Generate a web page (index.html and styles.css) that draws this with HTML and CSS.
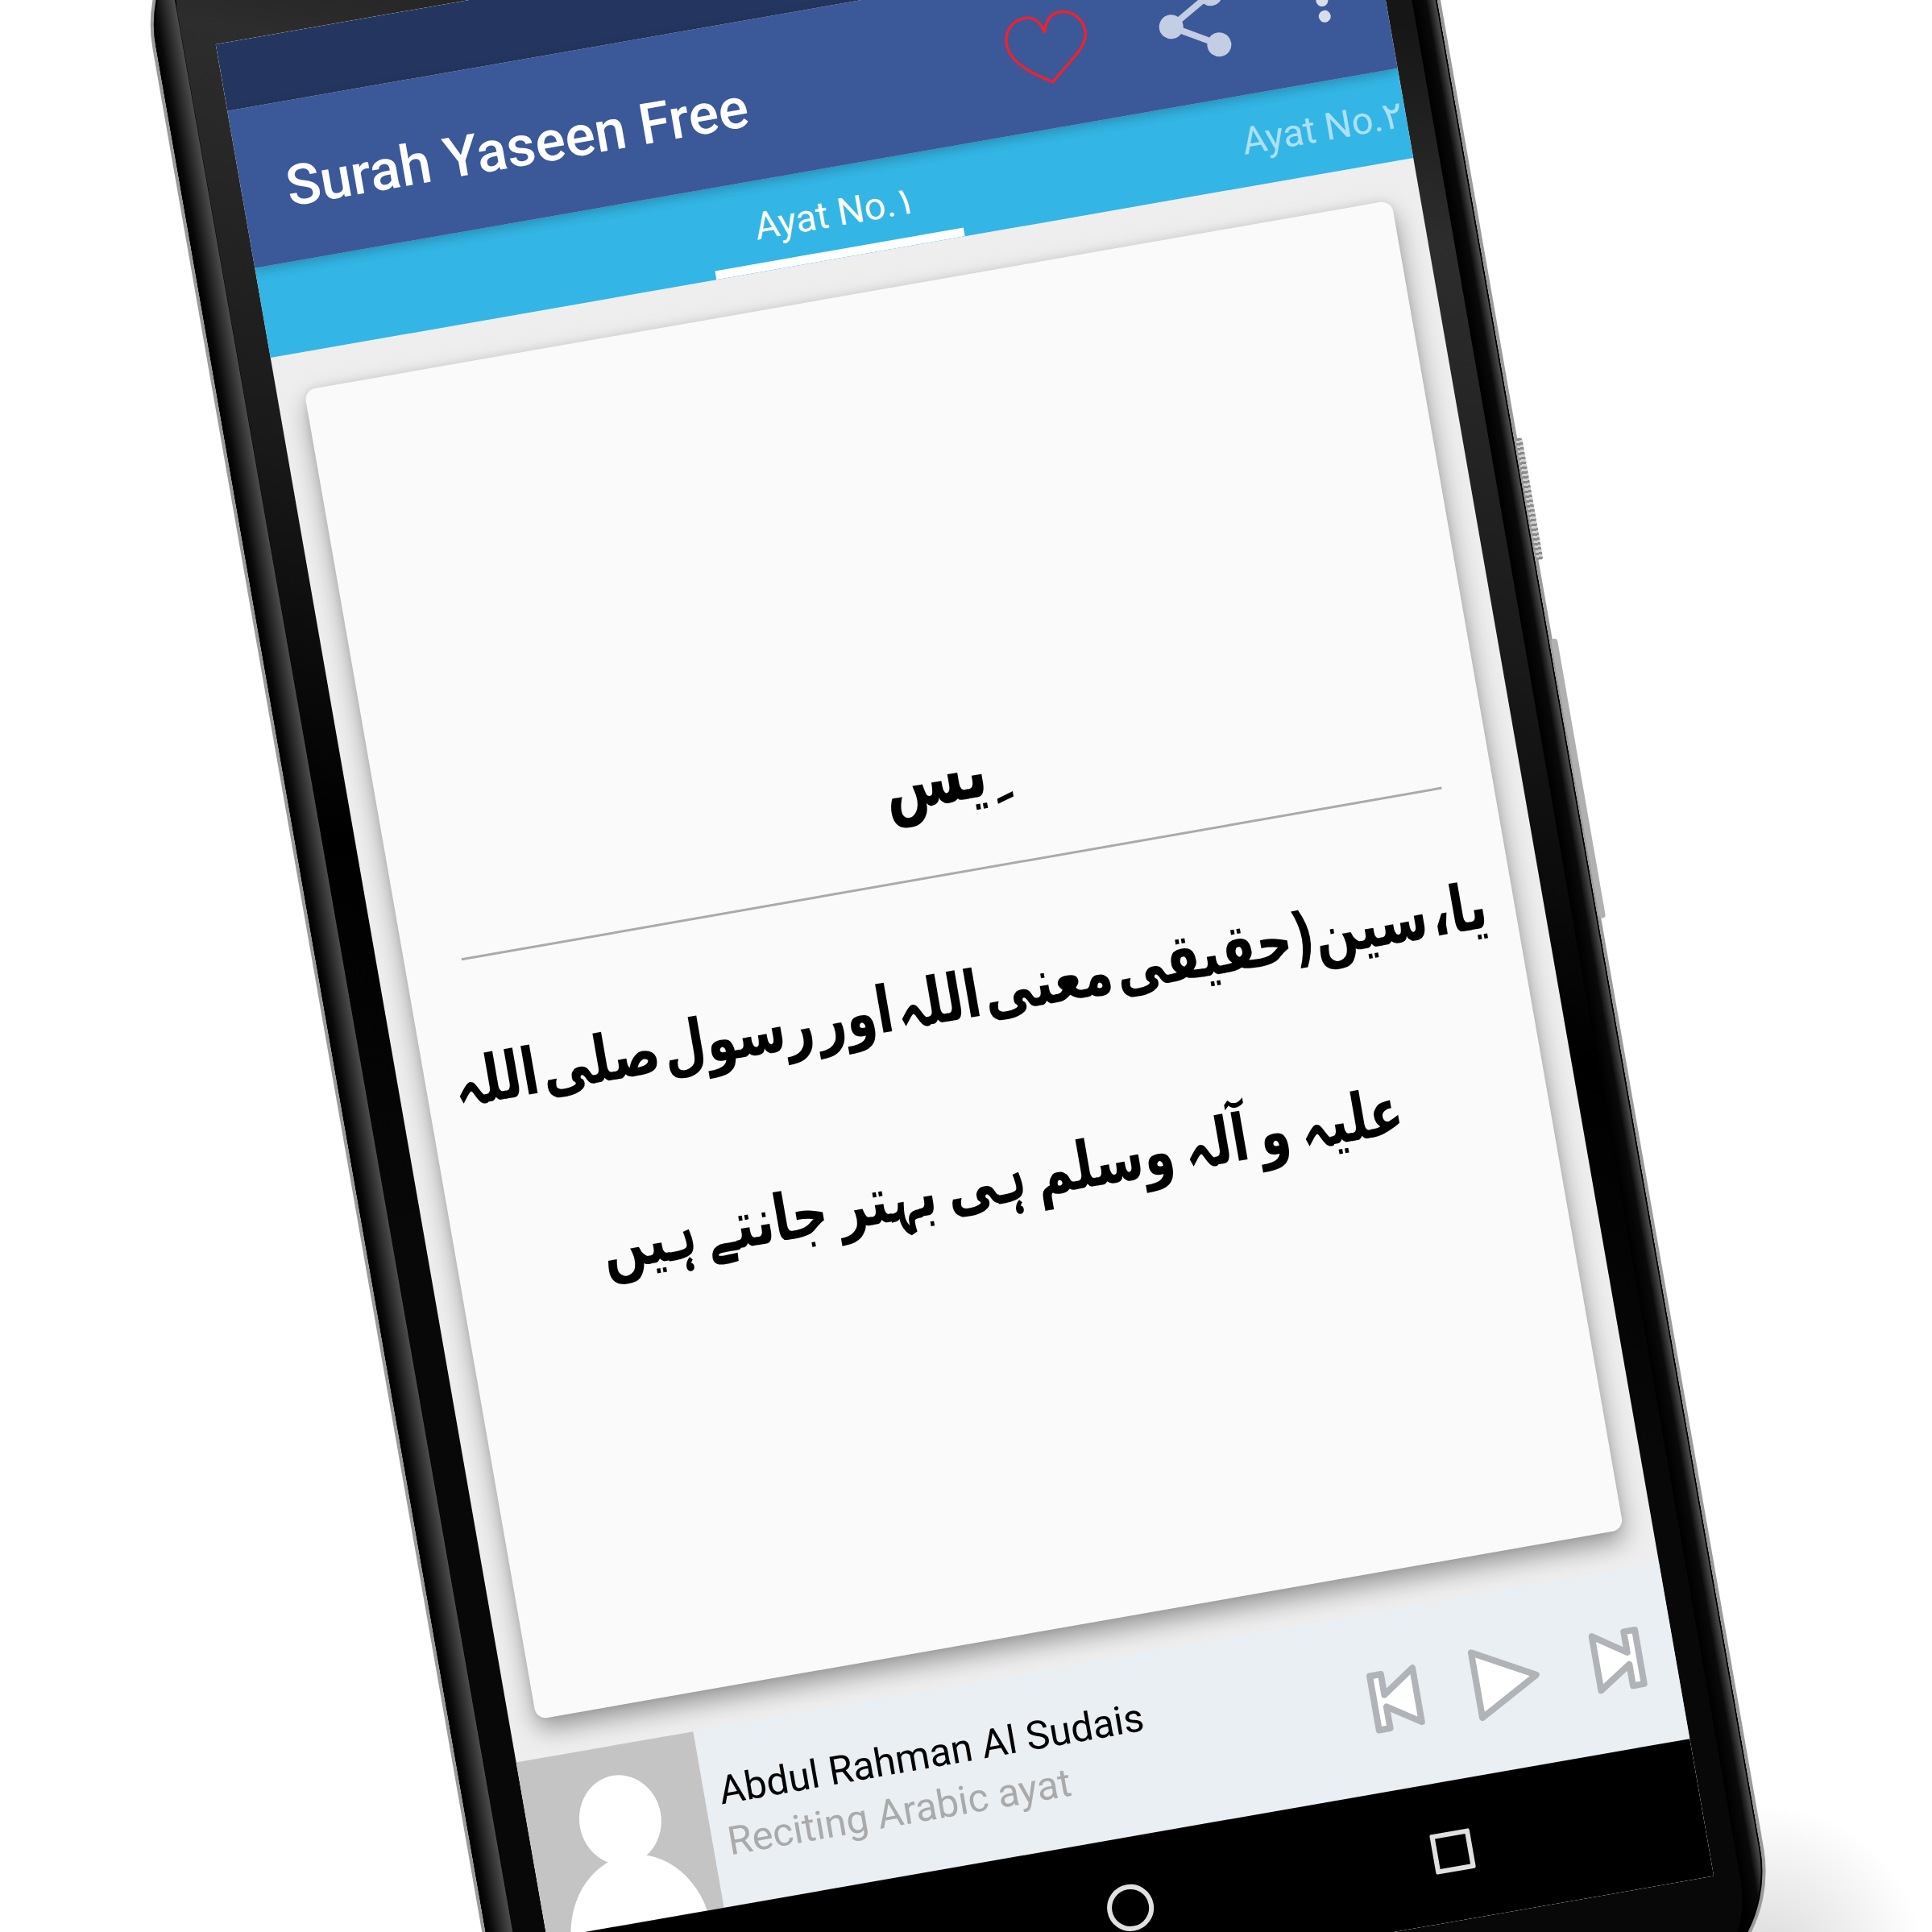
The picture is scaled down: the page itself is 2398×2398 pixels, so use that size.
FILE: index.html
```html
<!DOCTYPE html>
<html lang="en">
<head>
    <meta charset="UTF-8">
    <meta name="viewport" content="width=device-width, initial-scale=1.0">
    <title>Surah Yaseen Free</title>
    <link rel="stylesheet" href="styles.css">
</head>
<body>
    <div class="stage">
        <div class="floor-shadow"></div>

        <div class="phone">
            <span class="side-btn power"></span>
            <span class="side-btn volume"></span>

            <div class="plate">
                <div class="screen">
                    <div class="status-bar"></div>

                    <header class="app-bar">
                        <h1 class="title">Surah Yaseen Free</h1>
                        <div class="actions">
                            <svg class="icon-heart" viewBox="0 0 110 100">
                                <path d="M54 30C51 15 43 8 33 8C17 8 5 20 5 37C5 58 30 78 54 92C72 74 104 58 104 37C104 21 92 8 76 8C66 8 58 15 54 30Z"/>
                            </svg>
                            <svg class="icon-share" viewBox="0 0 100 100">
                                <path d="M73 18L18 50L73 82"/>
                                <circle cx="73" cy="18" r="15"/>
                                <circle cx="18" cy="50" r="15"/>
                                <circle cx="73" cy="82" r="15"/>
                            </svg>
                            <svg class="icon-more" viewBox="0 0 30 70">
                                <circle cx="15" cy="15" r="7.5"/>
                                <circle cx="15" cy="35" r="7.5"/>
                                <circle cx="15" cy="55" r="7.5"/>
                            </svg>
                        </div>
                    </header>

                    <nav class="tabs">
                        <span class="tab active">Ayat No.۱</span>
                        <span class="tab">Ayat No.۲</span>
                    </nav>

                    <main class="content">
                        <div class="card">
                            <p class="ayah" lang="ar" dir="rtl"><span class="ayah-text">&nbsp;ِیس</span></p>
                            <p class="translation" lang="ur" dir="rtl"><span class="tight">یا، سین(حقیقی معنی اللہ اور رسول صلی اللہ</span><br>علیہ و آلہ وسلم ہی بہتر جانتے ہیں</p>
                        </div>
                    </main>

                    <section class="player">
                        <svg class="avatar" viewBox="0 0 223 223">
                            <ellipse cx="115" cy="93" rx="51" ry="56"/>
                            <ellipse cx="116" cy="243" rx="88" ry="105"/>
                        </svg>
                        <div class="track">
                            <p class="track-name">Abdul Rahman Al Sudais</p>
                            <p class="track-sub">Reciting Arabic ayat</p>
                        </div>
                        <div class="controls">
                            <svg class="ctrl" viewBox="0 0 64 80">
                                <path d="M5 6L19 6L19 32L59 5L59 73L19 47L19 74L5 74Z"/>
                            </svg>
                            <svg class="ctrl play" viewBox="0 0 88 94">
                                <path d="M6 6L81 47L6 88Z"/>
                            </svg>
                            <svg class="ctrl" viewBox="0 0 64 80">
                                <path d="M59 6L45 6L45 32L5 5L5 73L45 47L45 74L59 74Z"/>
                            </svg>
                        </div>
                    </section>

                    <div class="nav-bar">
                        <svg class="nav-back" viewBox="0 0 50 58"><path d="M45 5L5 29L45 53Z"/></svg>
                        <span class="nav-home"></span>
                        <span class="nav-recent"></span>
                    </div>
                </div>
            </div>
        </div>
    </div>
</body>
</html>
```

FILE: styles.css
```css
html, body {
    margin: 0;
    padding: 0;
    background-color: #fff;
}

.stage {
    position: relative;
    width: 2398px;
    height: 2398px;
    overflow: hidden;
    background-color: #fff;
    font-family: Roboto, "DejaVu Sans", sans-serif;
}

.floor-shadow {
    position: absolute;
    left: 1990px;
    top: 2240px;
    width: 400px;
    height: 400px;
    background: radial-gradient(closest-side, rgba(0, 0, 0, 0.15), rgba(0, 0, 0, 0));
}

/* screen top left corner is the rotation origin */
.phone {
    position: absolute;
    left: 189px;
    top: -124px;
    box-sizing: border-box;
    width: 1585px;
    height: 2885px;
    padding: 0 31px 0 34px;
    display: flex;
    border: 4px solid #9a9a9a;
    border-radius: 170px;
    box-shadow: inset 0 0 0 2px #000;
    background: linear-gradient(90deg, #000 0, #0a0a0a 8px, #4c4c4c 33px, #000 34px, #000 calc(100% - 31px), #0a0a0a calc(100% - 14px), #5a5a5a 100%);
    transform-origin: 78px 175px;
    transform: rotate(-9.92deg);
}

.side-btn {
    position: absolute;
    right: -10px;
    width: 8px;
    border-radius: 4px;
    background-color: #b0b0b0;
}

.side-btn.power {
    top: 935px;
    height: 154px;
    background: repeating-linear-gradient(180deg, #8a8a8a 0, #8a8a8a 3px, #d0d0d0 3px, #d0d0d0 6px);
}

.side-btn.volume {
    top: 1188px;
    height: 352px;
}

.plate {
    flex: 1;
    padding: 175px 32px 150px 40px;
    border-radius: 130px;
    background: linear-gradient(20deg, #080808 0, #080808 35%, #000 50%, #1a1a1a 65%, #2d2d2d 80%, #161616 88%);
}

.screen {
    width: 1440px;
    height: 2560px;
    display: flex;
    flex-direction: column;
    overflow: hidden;
    background-color: #eee;
}

.status-bar {
    flex: none;
    height: 84px;
    background-color: #243660;
}

.app-bar {
    flex: none;
    position: relative;
    z-index: 2;
    height: 198px;
    padding: 0 63px 0 56px;
    display: flex;
    align-items: center;
    justify-content: space-between;
    background-color: #3b5998;
    box-shadow: 0 4px 14px rgba(0, 0, 0, 0.22);
}

.title {
    margin: 14px 0 0;
    font-size: 70px;
    font-weight: 500;
    color: #fff;
}

.actions {
    display: flex;
    align-items: center;
}

.icon-heart {
    width: 110px;
    height: 100px;
    fill: none;
    stroke: #ee2230;
    stroke-width: 3.5;
}

.icon-share {
    width: 100px;
    height: 100px;
    margin-left: 82px;
    fill: #c3cde3;
    stroke: #c3cde3;
    stroke-width: 0;
}

.icon-share path {
    fill: none;
    stroke-width: 8;
}

.icon-more {
    width: 30px;
    height: 70px;
    margin-left: 93px;
    fill: #d7dde9;
}

.tabs {
    flex: none;
    position: relative;
    height: 113px;
    padding-left: 620px;
    display: flex;
    align-items: center;
    gap: 414px;
    overflow: hidden;
    white-space: nowrap;
    background-color: #33b5e5;
}

.tab {
    flex: none;
    width: 200px;
    font-size: 47px;
    color: rgba(255, 255, 255, 0.6);
}

.tab.active {
    color: #fff;
}

.tab.active::after {
    content: "";
    position: absolute;
    left: 562px;
    bottom: 0;
    width: 313px;
    height: 11px;
    background-color: #fff;
}

.content {
    position: relative;
    z-index: 1;
    flex: none;
    height: 1770px;
    box-sizing: border-box;
    padding: 47px 36px 48px 34px;
    display: flex;
}

.card {
    flex: 1;
    min-width: 0;
    box-sizing: border-box;
    padding: 512px 15px 0;
    border-radius: 14px;
    background-color: #fafafa;
    box-shadow: 0 14px 30px rgba(0, 0, 0, 0.36), 0 0 10px rgba(0, 0, 0, 0.08);
    font-family: "DejaVu Sans", sans-serif;
    color: #000;
    text-align: center;
}

.ayah {
    margin: 0 49px 0 56px;
    padding-bottom: 21px;
    font-size: 72px;
    font-weight: 700;
    line-height: 195px;
    border-bottom: 3px solid #aaa;
}

.ayah-text {
    display: inline-block;
    margin-left: 24px;
    transform: scaleY(1.3);
}

/* glyphs stretched upward to get near the tall calligraphic face of the original */
.translation {
    margin: 34px 0 0;
    font-size: 62px;
    font-weight: 700;
    line-height: 179px;
    word-spacing: -8px;
    white-space: nowrap;
    transform: scaleY(1.3);
    transform-origin: top;
}

.tight {
    word-spacing: -17px;
}

.player {
    flex: none;
    height: 222px;
    padding-right: 39px;
    display: flex;
    align-items: center;
    background-color: #e9eff3;
}

.avatar {
    flex: none;
    width: 223px;
    height: 222px;
    fill: #fff;
    background-color: #c4c4c4;
}

.track {
    margin-left: 19px;
}

.track-name, .track-sub {
    margin: 0;
    line-height: 64px;
    font-size: 49px;
}

.track-name {
    color: #000;
}

.track-sub {
    color: #aaa;
}

.controls {
    margin-left: auto;
    display: flex;
    align-items: center;
    gap: 64px;
}

.ctrl {
    width: 64px;
    height: 80px;
    fill: #fff;
    stroke: #b0b4b8;
    stroke-width: 8;
    stroke-linejoin: round;
}

.ctrl.play {
    width: 88px;
    height: 94px;
}

.nav-bar {
    flex: none;
    height: 173px;
    display: flex;
    align-items: center;
    justify-content: center;
    gap: 352px;
    background-color: #000;
}

.nav-back {
    width: 50px;
    height: 58px;
    fill: none;
    stroke: #e0e0e0;
    stroke-width: 5;
}

.nav-home {
    box-sizing: border-box;
    width: 58px;
    height: 58px;
    border: 6px solid #e0e0e0;
    border-radius: 50%;
}

.nav-recent {
    box-sizing: border-box;
    width: 50px;
    height: 50px;
    border: 6px solid #e0e0e0;
    border-radius: 2px;
}
```
